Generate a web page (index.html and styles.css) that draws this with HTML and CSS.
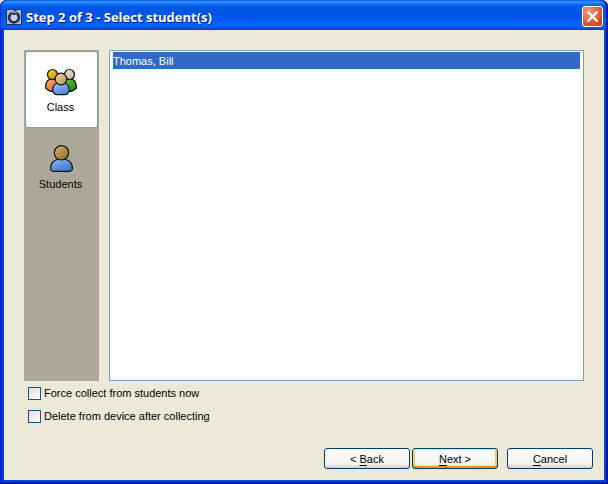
FILE: index.html
```html
<!DOCTYPE html>
<html lang="en">
<head>
<meta charset="utf-8">
<title>Step 2 of 3 - Select student(s)</title>
<link rel="stylesheet" href="styles.css">
</head>
<body>
<div class="window">
  <header class="titlebar">
    <svg class="app-icon" width="16" height="16" viewBox="0 0 16 16" aria-hidden="true">
      <rect x=".5" y=".5" width="15" height="15" fill="#b4bbe3" stroke="#1b3157"/>
      <path d="M5.2 4.3A5 5 0 1 0 10.8 4.3" fill="none" stroke="#193049" stroke-width="2.6"/>
      <path d="M5 3.6 8 5.3 11 3.6" fill="none" stroke="#193049" stroke-width="1.6"/>
      <path d="M7.5 2.2 10.4 1.6" stroke="#193049" stroke-width="1.3"/>
      <circle cx="8" cy="8.7" r="2.6" fill="#c6d0ed"/>
    </svg>
    <h1 class="title">Step 2 of 3 - Select student(s)</h1>
    <button class="close" type="button" aria-label="Close">
      <svg width="19" height="19" viewBox="0 0 19 19" aria-hidden="true"><path d="M4.500 4.500 14.500 14.500M14.500 4.500 4.500 14.500" stroke="#fff" stroke-width="2.400"/></svg>
    </button>
  </header>
  <main class="content">
    <div class="panes">
      <nav class="sidebar">
        <button class="tab selected" type="button">
          <svg width="34" height="28" viewBox="0 0 34 28" aria-hidden="true">
            <defs>
              <linearGradient id="gold" x2="1" y2="1"><stop offset="0" stop-color="#ffd633"/><stop offset="1" stop-color="#c98a00"/></linearGradient>
              <linearGradient id="cream" x2="1" y2="1"><stop offset="0" stop-color="#f5f0e0"/><stop offset="1" stop-color="#b5ab90"/></linearGradient>
              <linearGradient id="tan" x2="1" y2="1"><stop offset="0" stop-color="#f3dcae"/><stop offset="1" stop-color="#b58f50"/></linearGradient>
              <linearGradient id="orange" x2="1" y2="1"><stop offset="0" stop-color="#ffad70"/><stop offset="1" stop-color="#df6417"/></linearGradient>
              <linearGradient id="green" x2="1" y2="1"><stop offset="0" stop-color="#70cf45"/><stop offset="1" stop-color="#188000"/></linearGradient>
              <linearGradient id="blue" x2=".6" y2="1"><stop offset="0" stop-color="#a0c8ff"/><stop offset="1" stop-color="#4e83d6"/></linearGradient>
            </defs>
            <g stroke="#15140f" stroke-width="1.2">
              <path d="M1.600 20C1.600 14 4 10.600 8.500 10.600S15 14 15 20Q12 23.500 8.500 23.500T1.600 20Z" fill="url(#orange)"/>
              <circle cx="8.500" cy="6.500" r="5" fill="url(#gold)"/>
              <path d="M19 20C19 14 21 10.600 25.500 10.600S32.400 14 32.400 20Q29 23.500 25.500 23.500T19 20Z" fill="url(#green)"/>
              <circle cx="25.500" cy="6.500" r="5" fill="url(#cream)"/>
              <path d="M8.600 22.500C8.600 18 11 14.500 17 14.500S25.400 18 25.400 22.500Q24 26.600 21 26.600H13Q10 26.600 8.600 22.500Z" fill="url(#blue)"/>
              <circle cx="17" cy="11" r="5.800" fill="url(#tan)"/>
            </g>
          </svg>
          <span>Class</span>
        </button>
        <button class="tab" type="button">
          <svg width="34" height="28" viewBox="0 0 34 28" aria-hidden="true">
            <defs>
              <linearGradient id="brown" x2="1" y2="1"><stop offset="0" stop-color="#dcb976"/><stop offset="1" stop-color="#8a6426"/></linearGradient>
              <linearGradient id="azure" x2=".6" y2="1"><stop offset="0" stop-color="#8cb9f6"/><stop offset="1" stop-color="#3f78cf"/></linearGradient>
            </defs>
            <g stroke="#15140f" stroke-width="1.2">
              <path d="M6.600 24C6.600 18 9.500 14 17.500 14S28.400 18 28.400 24Q28 26.400 25 26.400H10Q7 26.400 6.600 24Z" fill="url(#azure)"/>
              <circle cx="17.500" cy="7.800" r="7.200" fill="url(#brown)"/>
            </g>
          </svg>
          <span>Students</span>
        </button>
      </nav>
      <ul class="list">
        <li class="item">Thomas, Bill</li>
      </ul>
    </div>
    <div class="options">
      <label class="option"><input type="checkbox">Force collect from students now</label>
      <label class="option"><input type="checkbox">Delete from device after collecting</label>
    </div>
    <footer class="actions">
      <button class="btn" type="button">&lt; <u>B</u>ack</button>
      <button class="btn primary" type="button"><u>N</u>ext &gt;</button>
      <button class="btn cancel" type="button"><u>C</u>ancel</button>
    </footer>
  </main>
</div>
</body>
</html>
```
FILE: styles.css
```css
* { box-sizing: border-box; }
html { background: #ece9d8; }
body {
  margin: 0;
  font: 11px/14px "Liberation Sans", Arial, sans-serif;
  color: #000;
}
button, input { font: inherit; color: inherit; margin: 0; padding: 0; }
.window {
  display: flex;
  flex-direction: column;
  min-height: 100vh;
  padding: 0 4px 4px;
  background: #0046e0;
  border-radius: 7px 7px 0 0;
  box-shadow: inset -1px -1px #00138c, inset 1px 0 #0019cf, inset -2px -2px #001ea0, inset 3px 0 #0831d9;
}
.titlebar {
  display: flex;
  align-items: center;
  height: 30px;
  margin: 0 -4px;
  padding: 3px 5px 0 6px;
  border-radius: 7px 7px 0 0;
  background: linear-gradient(#0058e6 0, #3a93ff 2px, #0872f8 4px, #0055e5 7px, #0054e3 14px, #005bf5 20px, #0066ff 25px, #0060f2 27px, #003dd0 30px);
  box-shadow: inset -2px 0 #00209f, inset 1px 0 #0831d9;
}
.title {
  flex: 1;
  margin: 0 0 0 4px;
  font: bold 13px/18px "Open Sans", "Noto Sans", sans-serif;
  color: #fff;
  text-shadow: 1px 1px #0a1883;
}
.close {
  display: flex;
  width: 21px;
  height: 21px;
  border: 1px solid #fff;
  border-radius: 3px;
  background: radial-gradient(circle at 30% 25%, #f09a80, #e35b38 55%, #c03a12);
}
.content {
  flex: 1;
  display: flex;
  flex-direction: column;
  padding: 20px 11px 11px 20px;
  background: #ece9d8;
}
.panes {
  flex: 1;
  display: flex;
  gap: 10px;
  margin-right: 9px;
}
.sidebar { width: 75px; padding: 1px; background: #aca899; }
.tab {
  display: flex;
  flex-direction: column;
  align-items: center;
  gap: 4px;
  width: 100%;
  height: 77px;
  padding: 16px 2px 0 0;
  border: 1px solid transparent;
  border-radius: 3px;
  background: none;
}
.tab.selected { background: #fff; border-color: #7f9db9; }
.list {
  flex: 1;
  margin: 0;
  padding: 1px 3px;
  list-style: none;
  background: #fff;
  border: 1px solid #7f9db9;
}
.item {
  height: 17px;
  line-height: 19px;
  background: #316ac5;
  color: #fff;
}
.options {
  display: flex;
  flex-direction: column;
  gap: 9px;
  padding: 5px 4px 25px;
}
.option { display: flex; align-items: center; align-self: flex-start; gap: 3px; }
.option input {
  appearance: none;
  width: 13px;
  height: 13px;
  border: 1px solid #1c5180;
  background: linear-gradient(135deg, #dcdcd7, #fff);
}
.actions { display: flex; justify-content: flex-end; gap: 2px; }
.btn {
  width: 86px;
  height: 21px;
  border: 1px solid #003c74;
  border-radius: 3px;
  background: linear-gradient(#fff, #f3f2ed 80%, #d6d0c5);
}
.primary { box-shadow: inset 0 1px #fde0a0, inset 0 -2px #e59700, inset 2px 0 #fbc761, inset -2px 0 #fbc761; }
.cancel { margin-left: 7px; }
.btn u { text-underline-offset: 2px; text-decoration-skip-ink: none; }
```
